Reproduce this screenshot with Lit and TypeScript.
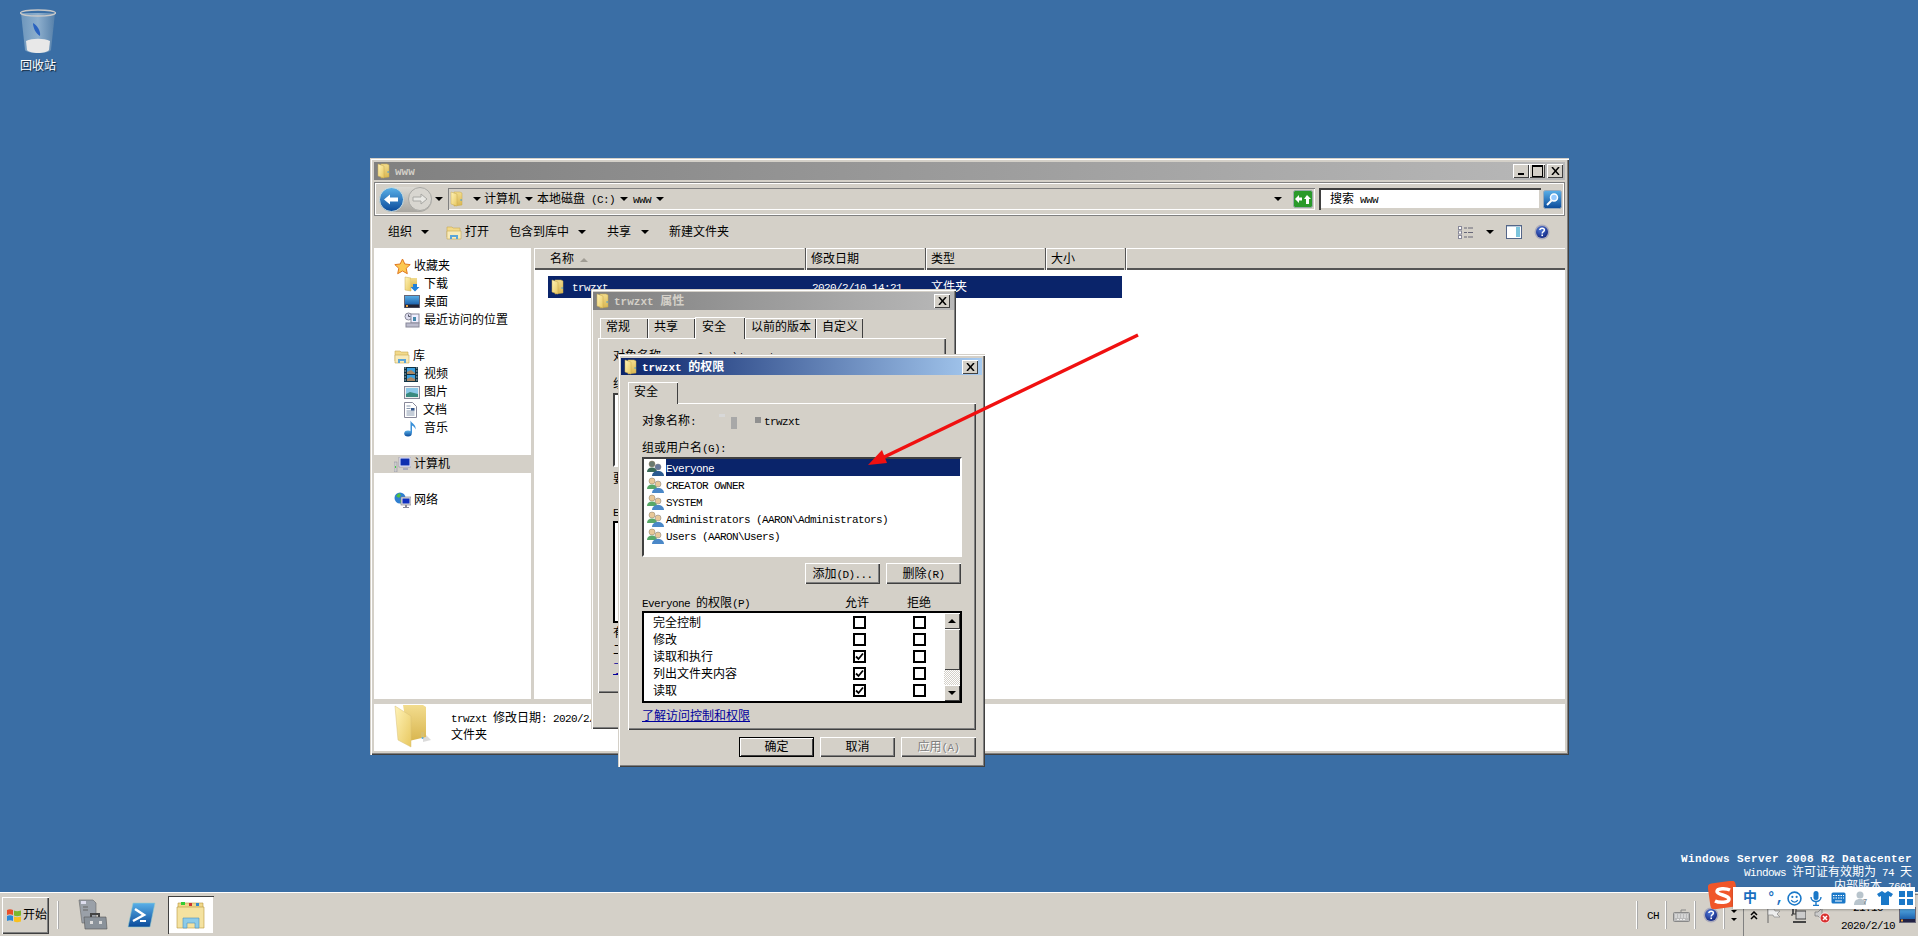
import { LitElement, css, html, svg } from "lit";
import { customElement } from "lit/decorators.js";

// ascii runs go in a narrower mono span, cjk stays at 12px like simsun
const t = (s: string) =>
  html`<span class="tx">${s
    .split(/([\x20-\x7e]+)/)
    .map((p, i) => (i % 2 ? html`<span class="lat">${p}</span>` : p))}</span>`;

const ic = (w: number, h: number, vb: string, body: unknown, cls = "") =>
  html`<svg class="ico ${cls}" width=${w} height=${h} viewBox=${vb}>${body}</svg>`;

const defs = html`<svg class="defs" width="0" height="0">
  <defs>
    <linearGradient id="fa" x1="0" y1="0" x2="1" y2="1"><stop offset="0" stop-color="#fff3b8" /><stop offset="1" stop-color="#e8c860" /></linearGradient>
    <linearGradient id="fb" x1="0" y1="0" x2="0" y2="1"><stop offset="0" stop-color="#f2dc8e" /><stop offset="1" stop-color="#d9b650" /></linearGradient>
    <linearGradient id="blue" x1="0" y1="0" x2="0" y2="1"><stop offset="0" stop-color="#5ab0e8" /><stop offset="1" stop-color="#0a4a9a" /></linearGradient>
    <linearGradient id="bin" x1="0" y1="0" x2="1" y2="0"><stop offset="0" stop-color="#7fa4c4" /><stop offset=".5" stop-color="#a9c4da" /><stop offset="1" stop-color="#5f86ab" /></linearGradient>
    <radialGradient id="navy" cx=".4" cy=".3" r=".8"><stop offset="0" stop-color="#4f78d8" /><stop offset="1" stop-color="#0c1f7a" /></radialGradient>
  </defs>
</svg>`;

const folder = (s = 16) =>
  ic(s, s, "0 0 16 16", svg`
    <path d="M5 1h6l2 1v12l-8 1z" fill="url(#fb)" stroke="#c8a848" stroke-width=".5"/>
    <path d="M2 1l6 2v12l-6-2z" fill="url(#fa)" stroke="#c9ab55" stroke-width=".5"/>
    <rect x="11.6" y="8" width="1" height="2" fill="#4aa0d8"/>`);

const bigFolder = ic(40, 44, "0 0 40 44", svg`
  <path d="M30 38l8-2-8-8z" fill="#999" opacity=".35"/>
  <path d="M10 1h20l3 2v30l-17 4z" fill="url(#fb)"/>
  <path d="M2 2l16 10v31L5 36z" fill="url(#fa)" stroke="#d8c078" stroke-width=".5"/>
  <rect x="28" y="28" width="3" height="6" fill="#d8c070"/><circle cx="29.5" cy="34" r="1" fill="#5aa8d8"/>`);

const library = ic(16, 16, "0 0 16 16", svg`
  <path d="M1 3h5l1 1h7v9H1z" fill="#f2d98a" stroke="#c8a850" stroke-width=".6"/>
  <path d="M1 7h14v8H1z" fill="#f8eab8" stroke="#c8a850" stroke-width=".6"/>
  <path d="M4 15v-4h8v4h-2v-2H6v2z" fill="#5aa4d8"/>`);

const star = ic(17, 17, "0 0 17 17", svg`<path d="M8.5 1l2.3 5 5.4.6-4 3.7 1.1 5.4-4.8-2.7-4.8 2.7 1.1-5.4-4-3.7 5.4-.6z" fill="#fcc850" stroke="#e07820" stroke-width="1"/>`);
const download = ic(16, 16, "0 0 16 16", svg`
  <path d="M1 1l6 1v13l-6-1z" fill="url(#fa)" stroke="#c9ab55" stroke-width=".5"/><path d="M7 2h6v9H7z" fill="url(#fb)"/>
  <path d="M9 8h4v3h2.500l-4.500 4.500L6.500 11H9z" fill="#2080d8"/>`);
const desk = ic(16, 14, "0 0 16 14", svg`<rect x=".5" y=".5" width="15" height="12" fill="url(#blue)" stroke="#667"/><rect x="1" y="9.500" width="14" height="3" fill="#223"/><rect x="2" y="10" width="2" height="2" fill="#e8a040"/>`);
const recent = ic(16, 16, "0 0 16 16", svg`
  <circle cx="4.500" cy="4.500" r="3.500" fill="#dde" stroke="#889"/><path d="M4.500 2.500v2h2" stroke="#556" fill="none"/>
  <rect x="7" y="2" width="8" height="9" fill="#eef" stroke="#889"/><rect x="2" y="11" width="13" height="4" fill="#bbc" stroke="#889"/><rect x="9" y="5" width="3" height="4" fill="#48a"/>`);
const video = ic(14, 15, "0 0 14 15", svg`<rect width="14" height="15" fill="#134"/><rect x="3" y="1" width="8" height="6" fill="#3aa0e0"/><rect x="3" y="8" width="8" height="6" fill="#3aa0e0"/><path d="M3 5l4-2 4 3v1H3zM3 12l4-2 4 2v2H3z" fill="#a86"/><path d="M.7 1h1M.7 4h1M.7 7h1M.7 10h1M.7 13h1M12.300 1h1M12.300 4h1M12.300 7h1M12.300 10h1M12.300 13h1" stroke="#fff"/>`);
const pic = ic(16, 13, "0 0 16 13", svg`<rect x=".5" y=".5" width="15" height="12" fill="#eee" stroke="#889"/><rect x="2" y="2" width="12" height="9" fill="#8cc8e8"/><path d="M2 8l4-2 8 2v3H2z" fill="#3a8a80"/>`);
const doc = ic(13, 16, "0 0 13 16", svg`<path d="M.5.5h8l4 4v11H.5z" fill="#fff" stroke="#889"/><path d="M2.500 4h4M2.500 6.500h4M2.500 9h8M2.500 11h8M2.500 13h8" stroke="#8a9ab0"/><rect x="7" y="6" width="3.500" height="2.500" fill="#358"/>`);
const music = ic(14, 17, "0 0 14 17", svg`<ellipse cx="4" cy="13.500" rx="3.800" ry="3" fill="url(#blue)"/><path d="M6.500 13V.500c1 3 6 4 5 9-.5-2.500-2.500-3.500-3.500-4V13z" fill="#3a90d8"/>`);
const computer = ic(17, 15, "0 0 17 15", svg`<rect x="0" y="5" width="3" height="10" fill="#ccc" stroke="#889" stroke-width=".5"/><rect x="1" y="9" width="1" height="2" fill="#4c4"/><rect x="5" y="0" width="12" height="10" fill="#eef" stroke="#889" stroke-width=".6"/><rect x="6.500" y="1.500" width="9" height="7" fill="#1030b0"/><path d="M9 11h5v2H9z" fill="#aab"/>`);
const network = ic(17, 17, "0 0 17 17", svg`<circle cx="6" cy="6" r="5.500" fill="#2f7fd0"/><path d="M2 4l3-3 2 2-2 3zM6 8l3 1-2 3z" fill="#50c040"/><rect x="7" y="5" width="10" height="8" fill="#ddd" stroke="#778" stroke-width=".6"/><rect x="8.500" y="6.500" width="7" height="5" fill="#1030c0"/><path d="M11 13h2v2h2v1h-6v-1h2z" fill="#889"/>`);

const users = (dark = false) => ic(17, 16, "0 0 17 16", svg`
  <circle cx="5" cy="4" r="3" fill=${dark ? "#6a7a70" : "#e8c898"} stroke="#8a7a60" stroke-width=".5"/>
  <path d="M0 12c0-3 2-4.500 5-4.500S10 9 10 12z" fill=${dark ? "#3a6a58" : "#58a868"}/>
  <circle cx="11" cy="7" r="3" fill=${dark ? "#66789a" : "#e8c898"} stroke="#7a7a80" stroke-width=".5"/>
  <path d="M5 16c0-3 2.500-5 6-5s6 2 6 5z" fill=${dark ? "#2a5a90" : "#4a88c8"}/>`);

const tick = ic(9, 9, "0 0 9 9", svg`<path d="M1 4.500l2.500 2.500L8 1.500" fill="none" stroke="#000" stroke-width="1.800"/>`);
const xGlyph = ic(9, 8, "0 0 9 8", svg`<path d="M1 0l7 8M8 0L1 8" stroke="#000" stroke-width="1.500"/>`);
const helpIcon = ic(16, 16, "0 0 16 16", svg`<circle cx="8" cy="8" r="7.500" fill="#aab" /><circle cx="8" cy="8" r="6" fill="url(#navy)"/><path d="M5.800 6c.3-2.500 4.600-2.500 4.600 0 0 1.800-2.200 1.600-2.200 3.500" fill="none" stroke="#fff" stroke-width="1.500"/><rect x="7.400" y="10.500" width="1.600" height="1.600" fill="#fff"/>`);

const perms: [string, boolean][] = [
  ["完全控制", false],
  ["修改", false],
  ["读取和执行", true],
  ["列出文件夹内容", true],
  ["读取", true],
];

@customElement("app-root")
export class AppRoot extends LitElement {
  static styles = css`
    :host { display: block; }
    * { box-sizing: border-box; }
    .root {
      position: relative; width: 1918px; height: 936px; overflow: hidden; display: flex; flex-direction: column;
      font: 12px/14px "Liberation Mono", "Noto Sans CJK SC", monospace; color: #000; background: #3a6ea5; white-space: nowrap;
    }
    .tx { display: inline-block; padding-top: 2px; }
    .lat { font: 11px/14px "Liberation Mono", monospace; letter-spacing: -0.6px; white-space: pre; }
    .defs { position: absolute; }
    .ico { display: block; flex: none; }
    .sp { flex: 1; }
    .ml2 { margin-left: 2px; } .ml3 { margin-left: 3px; } .ml4 { margin-left: 4px; } .ml5 { margin-left: 5px; }
    .ml6 { margin-left: 6px; } .ml7 { margin-left: 7px; } .ml8 { margin-left: 8px; } .ml9 { margin-left: 9px; }
    .ml10 { margin-left: 10px; } .ml11 { margin-left: 11px; } .ml12 { margin-left: 12px; } .ml17 { margin-left: 17px; }
    .ml19 { margin-left: 19px; } .ml20 { margin-left: 20px; } .ml21 { margin-left: 21px; } .ml22 { margin-left: 22px; }
    .dn { width: 0; height: 0; border: 4px solid transparent; border-top-color: #000; border-bottom: 0; flex: none; }

    .desktop { flex: 1; position: relative; padding: 9px 0 0 20px; }
    .bin { width: 36px; display: flex; flex-direction: column; align-items: center; color: #fff; text-shadow: 1px 1px 1px #123; }
    .bin span { margin-top: 2px; }
    .watermark { position: absolute; right: 6px; top: 850px; text-align: right; color: #fff; }
    .watermark b .lat { font-weight: 700; letter-spacing: 0.4px; }
    .watermark div { height: 14px; }

    .win {
      position: absolute; background: #d4d0c8; display: flex; flex-direction: column;
      box-shadow: inset 1px 1px #d4d0c8, inset 2px 2px #fff, inset -1px -1px #404040, inset -2px -2px #808080;
    }
    .explorer { left: 370px; top: 158px; width: 1199px; height: 597px; padding: 4px; }
    .props { left: 591px; top: 289px; width: 365px; height: 440px; padding: 3px 2px; }
    .perm { left: 618px; top: 354px; width: 367px; height: 413px; padding: 4px 3px; }

    .title { height: 18px; flex: none; display: flex; align-items: center; padding: 0 2px; font-weight: 700; color: #d4d0c8; background: linear-gradient(90deg, #808080, #b8b8b8); }
    .title .lat { font-weight: 700; letter-spacing: 0; }
    .title.on { color: #fff; background: linear-gradient(90deg, #0a246a, #a6caf0); height: 17px; }
    .title .label { margin-left: 3px; }
    .capbtn { width: 16px; height: 14px; background: #d4d0c8; display: flex; align-items: center; justify-content: center; box-shadow: inset 1px 1px #fff, inset -1px -1px #404040; flex: none; }
    .min::after { content: ""; width: 6px; height: 2px; background: #000; margin-top: 6px; }
    .max::after { content: ""; width: 9px; height: 9px; border: 1px solid #000; border-top-width: 2px; }
    .capgap { margin-left: 2px; }

    .addr { height: 34px; margin-top: 2px; flex: none; display: flex; align-items: center; padding: 0 3px 0 5px; box-shadow: inset 0 0 0 1px #808080, inset 0 0 0 2px #fff; }
    .navbtns { display: flex; align-items: center; gap: 4px; border-radius: 13px; background: linear-gradient(#dcdad4, #a8a6a0); flex: none; }
    .addrbox { flex: 1; height: 22px; margin-left: 5px; display: flex; align-items: center; padding-left: 1px; box-shadow: inset 1px 1px #808080, inset -1px -1px #fff; }
    .search { width: 222px; height: 22px; margin-left: 4px; background: #fff; display: flex; align-items: center; padding-left: 11px; box-shadow: inset 2px 2px #404040, inset -2px -2px #d4d0c8; }

    .cmd { height: 32px; flex: none; display: flex; align-items: center; padding: 0 15px 0 14px; }
    .body { flex: 1; display: flex; min-height: 0; }
    .nav { width: 157px; background: #fff; padding-top: 9px; flex: none; }
    .nav .row { height: 18px; display: flex; align-items: center; padding-left: 20px; }
    .nav .sub { padding-left: 30px; }
    .nav .sub svg { margin-right: 4px; }
    .nav .row.hd svg { margin-right: 3px; }
    .nav .sel { background: #d4d0c8; }
    .nav .gap { height: 18px; }
    .main { flex: 1; margin-left: 3px; background: #fff; min-width: 0; }
    .hdr { height: 22px; background: #d4d0c8; display: flex; box-shadow: inset 0 1px #fff, inset 0 -2px #555; }
    .hdr div { padding: 3px 0 0 5px; box-shadow: inset -1px 0 #555, inset -2px 0 #d4d0c8, inset 1px 1px #fff; }
    .hdr .c1 { width: 272px; padding-left: 16px; display: flex; }
    .hdr .c1 i { margin: 7px 0 0 6px; width: 0; height: 0; border: 4px solid transparent; border-bottom-color: #a09c94; border-top: 0; }
    .hdr .c2, .hdr .c3 { width: 120px; }
    .hdr .c4 { width: 80px; }
    .hdr .c5 { flex: 1; box-shadow: inset 1px 1px #fff; }
    .item { margin: 6px 0 0 14px; width: 574px; height: 22px; background: #0a246a; color: #fff; display: grid; grid-template-columns: 264px 119px 1fr; align-items: center; }
    .item .nm { display: flex; align-items: center; gap: 6px; padding-left: 2px; }
    .details { height: 47px; margin-top: 5px; flex: none; background: #fff; display: flex; padding: 0 0 0 19px; }
    .details .txt { margin-left: 18px; padding-top: 4px; line-height: 18px; }
    .details .txt div { height: 17px; }

    .tabs { display: flex; align-items: flex-end; height: 28px; flex: none; }
    .tab { height: 20px; padding: 1px 0 0 6px; background: #d4d0c8; box-shadow: inset 1px 1px #fff, inset -1px 0 #404040; flex: none; }
    .tab.act { height: 22px; margin-bottom: -1px; position: relative; z-index: 1; padding-top: 2px; padding-left: 7px; }
    .props .tabs { padding-left: 7px; }
    .w48 { width: 48px; } .w47 { width: 47px; } .w50 { width: 50px; } .w71 { width: 71px; }
    .page { box-shadow: inset 1px 1px #fff, inset -1px -1px #404040, inset -2px -2px #808080; }
    .props .page { margin: 0 8px 0 5px; height: 355px; padding: 11px 0 0 15px; }
    .line { height: 14px; display: flex; align-items: center; }
    .mt1 { margin-top: 1px; } .mt2 { margin-top: 2px; } .mt3 { margin-top: 3px; } .mt5 { margin-top: 5px; } .mt6 { margin-top: 6px; } .mt7 { margin-top: 7px; }
    .mt8 { margin-top: 8px; } .mt12 { margin-top: 12px; } .mt13 { margin-top: 13px; } .mt14 { margin-top: 14px; } .mt19 { margin-top: 19px; }
    .lb1 { width: 310px; height: 74px; background: #fff; border: 2px solid; border-color: #404040 #fff #fff #404040; }
    .lb2 { width: 310px; height: 102px; background: #fff; border: 2px solid #000; }
    .link .tx { color: #00009c; text-decoration: underline; }

    .perm .tabs { height: 28px; padding-left: 0; margin: 0 0 0 7px; }
    .perm .tab.act { width: 50px; padding-left: 6px; }
    .perm .page { margin: 0 6px 0 7px; height: 327px; padding: 11px 0 0 14px; }
    .redact { display: flex; width: 68px; height: 14px; flex: none; }
    .redact i { display: block; background: #a8a8a8; flex: none; }
    .r1 { width: 6px; height: 3px; margin: 0 0 0 23px; background: #d8d8d8 !important; }
    .r2 { width: 6px; height: 12px; margin: 3px 0 0 6px; }
    .r3 { width: 6px; height: 6px; margin: 3px 0 0 18px; background: #909090 !important; }
    .users { width: 320px; height: 100px; background: #fff; border: 2px solid; border-color: #404040 #fff #fff #404040; padding: 0 0 0 1px; }
    .urow { height: 17px; display: flex; align-items: center; padding-left: 2px; }
    .urow span.n { margin-left: 2px; flex: 1; height: 17px; line-height: 17px; }
    .urow.sel span.n { background: #0a246a; color: #fff; }
    .acts { display: flex; justify-content: flex-end; width: 319px; gap: 6px; }
    .btn { width: 75px; height: 21px; background: #d4d0c8; display: flex; align-items: center; justify-content: center; box-shadow: inset 1px 1px #fff, inset -1px -1px #404040, inset -2px -2px #808080; flex: none; }
    .phead { display: flex; }
    .phead .a { margin-left: 95px; }
    .phead .b { margin-left: 38px; }
    .plist { width: 320px; height: 92px; background: #fff; border: 2px solid #000; display: flex; }
    .prows { flex: 1; }
    .prow { height: 17px; display: grid; grid-template-columns: 200px 13px 47px 13px; align-items: center; padding-left: 9px; }
    .prow:first-child { margin-top: 1px; }
    .chk { width: 13px; height: 13px; border: 2px solid #000; background: #fff; display: flex; align-items: center; justify-content: center; overflow: hidden; }
    .sb { width: 16px; display: flex; flex-direction: column; background: repeating-conic-gradient(#fff 0 25%, #d4d0c8 0 50%) 0 0 / 2px 2px; }
    .sbb { height: 16px; background: #d4d0c8; display: flex; align-items: center; justify-content: center; box-shadow: inset 1px 1px #fff, inset -1px -1px #404040; flex: none; }
    .sbb.up::after { content: ""; border: 4px solid transparent; border-bottom-color: #000; border-top: 0; }
    .sbb.down::after { content: ""; border: 4px solid transparent; border-top-color: #000; border-bottom: 0; }
    .thumb { height: 41px; background: #d4d0c8; box-shadow: inset 1px 1px #fff, inset -1px -1px #404040; }
    .foot { display: flex; justify-content: flex-end; padding-right: 6px; gap: 6px; margin-top: 7px; }
    .foot .btn { height: 20px; }
    .btn.def { box-shadow: inset 0 0 0 1px #000, inset 2px 2px #fff, inset -2px -2px #404040; }
    .btn.off { color: #808080; text-shadow: 1px 1px #fff; }

    .arrow { position: absolute; left: 0; top: 0; pointer-events: none; }

    .taskbar { height: 44px; flex: none; position: relative; background: #d4d0c8; box-shadow: inset 0 1px #fff; display: flex; align-items: center; padding-top: 2px; }
    .start { margin-left: 2px; width: 47px; height: 37px; display: flex; align-items: center; padding-left: 4px; gap: 1px; box-shadow: inset 1px 1px #fff, inset -1px -1px #404040, inset -2px -2px #808080; flex: none; }
    .vsep { width: 2px; height: 28px; background: #808080; box-shadow: inset -1px 0 #fff; flex: none; }
    .vsep.lt { background: #fff; box-shadow: inset -1px 0 #aaa; }
    .active { width: 46px; height: 38px; margin-left: 12px; display: flex; align-items: center; justify-content: center; background: #fff; box-shadow: inset 1px 1px #404040, inset -1px -1px #d4d0c8; flex: none; }
    .tray { height: 42px; margin-left: 6px; width: 175px; display: flex; align-items: center; padding-left: 4px; box-shadow: inset 1px 1px #808080; flex: none; }
    .clock { width: 56px; margin-left: 10px; text-align: center; line-height: 18px; }
    .clock div { height: 18px; }
    .updown { display: flex; flex-direction: column; gap: 5px; align-items: center; }
    .updown i { display: block; border: 3.5px solid transparent; border-top-color: #000; border-bottom: 0; }
    .sogou { position: absolute; left: 1733px; top: 887px; width: 182px; height: 22px; background: #fff; display: flex; align-items: center; box-shadow: 0 1px 2px #0004; color: #1a6fc0; font-weight: 700; font-size: 14px; padding-left: 10px; }
    .logo { position: absolute; left: 1708px; top: 881px; }
  `;

  private cap(x = false) {
    return html`<div class="capbtn">${x ? xGlyph : ""}</div>`;
  }

  private get navPart() {
    return html`<div class="nav">
      <div class="row hd">${star}${t("收藏夹")}</div>
      <div class="row sub">${download}${t("下载")}</div>
      <div class="row sub">${desk}${t("桌面")}</div>
      <div class="row sub">${recent}${t("最近访问的位置")}</div>
      <div class="gap"></div>
      <div class="row hd">${library}${t("库")}</div>
      <div class="row sub">${video}<span class="ml2">${t("视频")}</span></div>
      <div class="row sub">${pic}${t("图片")}</div>
      <div class="row sub">${doc}<span class="ml2">${t("文档")}</span></div>
      <div class="row sub">${music}<span class="ml2">${t("音乐")}</span></div>
      <div class="gap"></div>
      <div class="row hd sel">${computer}${t("计算机")}</div>
      <div class="gap"></div>
      <div class="row hd">${network}${t("网络")}</div>
    </div>`;
  }

  private get explorerPart() {
    const back = ic(25, 25, "0 0 25 25", svg`<circle cx="12.500" cy="12.500" r="12" fill="url(#blue)" stroke="#cdd" /><path d="M5 12.500l6-5v3h8v4h-8v3z" fill="#fff"/>`);
    const fwd = ic(24, 24, "0 0 24 24", svg`<circle cx="12" cy="12" r="11.500" fill="#d8d6d0" stroke="#a8a8a4"/><path d="M19 12l-6-5v3H5v4h8v3z" fill="#e8e8e4" stroke="#a8a8a4"/>`);
    const refresh = ic(20, 18, "0 0 20 18", svg`<rect x=".5" y=".5" width="19" height="17" rx="2" fill="#2a9a2a" stroke="#9aa"/><path d="M2 9l4-4v2.500h3v3H6V13zM18 9l-4-4-3 4h2v5h3V9z" fill="#fff"/>`);
    const findBtn = ic(19, 19, "0 0 19 19", svg`<rect x=".5" y=".5" width="18" height="18" rx="2" fill="url(#blue)" stroke="#9ab"/><circle cx="11" cy="7.500" r="3.500" fill="#9cf" stroke="#fff" stroke-width="1.500"/><path d="M8.500 10.500L4 15" stroke="#fff" stroke-width="2"/>`);
    const views = ic(16, 13, "0 0 16 13", svg`<rect x=".5" y=".5" width="3" height="3" fill="#fff" stroke="#889"/><rect x=".5" y="5" width="3" height="3" fill="#fff" stroke="#889"/><rect x=".5" y="9.500" width="3" height="3" fill="#fff" stroke="#889"/><path d="M6 2h3M10 2h5M6 6.500h3M10 6.500h5M6 11h3M10 11h5" stroke="#667"/>`);
    const pane = ic(16, 14, "0 0 16 14", svg`<rect x=".5" y=".5" width="15" height="13" fill="#fff" stroke="#568"/><rect x="10" y="2" width="4" height="10" fill="#7cc4dc"/><rect x="1" y="1" width="14" height="1" fill="#bcd"/>`);
    return html`<div class="win explorer">
      <div class="title">${folder()}<span class="label">${t("www")}</span><span class="sp"></span>
        <div class="capbtn min"></div><div class="capbtn max"></div><div class="capbtn capgap">${xGlyph}</div></div>
      <div class="addr">
        <div class="navbtns">${back}${fwd}</div>
        <span class="dn ml3"></span>
        <div class="addrbox">
          ${folder()}<span class="dn ml8"></span><span class="ml3">${t("计算机")}</span><span class="dn ml5"></span>
          <span class="ml4">${t("本地磁盘 (C:)")}</span><span class="dn ml5"></span><span class="ml5">${t("www")}</span><span class="dn ml5"></span>
          <span class="sp"></span><span class="dn"></span><span class="ml11">${refresh}</span><span class="ml2"></span>
        </div>
        <div class="search">${t("搜索 www")}</div>
        <span class="ml2">${findBtn}</span>
      </div>
      <div class="cmd">
        ${t("组织")}<span class="dn ml9"></span><span class="ml17">${library}</span><span class="ml3">${t("打开")}</span>
        <span class="ml20">${t("包含到库中")}</span><span class="dn ml9"></span>
        <span class="ml21">${t("共享")}</span><span class="dn ml10"></span>
        <span class="ml20">${t("新建文件夹")}</span><span class="sp"></span>
        ${views}<span class="dn ml12"></span><span class="ml12">${pane}</span><span class="ml12">${helpIcon}</span>
      </div>
      <div class="body">
        ${this.navPart}
        <div class="main">
          <div class="hdr">
            <div class="c1">${t("名称")}<i></i></div><div class="c2">${t("修改日期")}</div>
            <div class="c3">${t("类型")}</div><div class="c4">${t("大小")}</div><div class="c5"></div>
          </div>
          <div class="item"><span class="nm">${folder()}${t("trwzxt")}</span><span>${t("2020/2/10 14:21")}</span><span>${t("文件夹")}</span></div>
        </div>
      </div>
      <div class="details">${bigFolder}
        <div class="txt"><div>${t("trwzxt 修改日期: 2020/2/10 14:21")}</div><div>${t("文件夹")}</div></div>
      </div>
    </div>`;
  }

  private get propsPart() {
    return html`<div class="win props">
      <div class="title">${folder()}<span class="label">${t("trwzxt 属性")}</span><span class="sp"></span>${this.cap(true)}<span class="ml2"></span></div>
      <div class="tabs">
        <div class="tab w48">${t("常规")}</div><div class="tab w47">${t("共享")}</div><div class="tab act w50">${t("安全")}</div>
        <div class="tab w71">${t("以前的版本")}</div><div class="tab w47">${t("自定义")}</div>
      </div>
      <div class="page">
        <div class="line">${t("对象名称:     C:\\www\\trwzxt")}</div>
        <div class="line mt14">${t("组或用户名(G):")}</div>
        <div class="lb1 mt2"></div>
        <div class="line mt5">${t("要更改权限,请单击“编辑”。")}</div>
        <div class="line mt19">${t("Everyone 的权限")}</div>
        <div class="lb2 mt2"></div>
        <div class="line mt3">${t("有关特殊权限或高级设置,请单击“高级”。")}</div>
        <div class="line mt3">${t("二")}</div>
        <div class="line mt5 link">${t("了解访问控制和权限")}</div>
      </div>
    </div>`;
  }

  private get permPart() {
    const names = ["CREATOR OWNER", "SYSTEM", "Administrators (AARON\\Administrators)", "Users (AARON\\Users)"];
    return html`<div class="win perm">
      <div class="title on">${folder()}<span class="label">${t("trwzxt 的权限")}</span><span class="sp"></span>${this.cap(true)}<span class="ml2"></span></div>
      <div class="tabs"><div class="tab act">${t("安全")}</div></div>
      <div class="page">
        <div class="line">${t("对象名称:")}<span class="redact"><i class="r1"></i><i class="r2"></i><i class="r3"></i></span>${t("trwzxt")}</div>
        <div class="line mt13">${t("组或用户名(G):")}</div>
        <div class="users mt2">
          <div class="urow sel">${users(true)}<span class="n">${t("Everyone")}</span></div>
          ${names.map((n) => html`<div class="urow">${users()}<span class="n">${t(n)}</span></div>`)}
        </div>
        <div class="acts mt6"><div class="btn">${t("添加(D)...")}</div><div class="btn">${t("删除(R)")}</div></div>
        <div class="line phead mt12"><span>${t("Everyone 的权限(P)")}</span><span class="a">${t("允许")}</span><span class="b">${t("拒绝")}</span></div>
        <div class="plist mt1">
          <div class="prows">
            ${perms.map(([n, on]) => html`<div class="prow"><span>${t(n)}</span><span class="chk">${on ? tick : ""}</span><span></span><span class="chk"></span></div>`)}
          </div>
          <div class="sb"><div class="sbb up"></div><div class="thumb"></div><span class="sp"></span><div class="sbb down"></div></div>
        </div>
        <div class="line mt6 link">${t("了解访问控制和权限")}</div>
      </div>
      <div class="foot">
        <div class="btn def">${t("确定")}</div><div class="btn">${t("取消")}</div><div class="btn off">${t("应用(A)")}</div>
      </div>
    </div>`;
  }

  private get taskbarPart() {
    const flag = ic(16, 16, "0 0 16 16", svg`<path d="M1 3c2-1 4-1 6 0v5C5 7 3 7 1 8z" fill="#e8502a"/><path d="M8 3.500c2 1 4 1 7 0v5c-3 1-5 1-7 0z" fill="#7ab82c"/><path d="M1 9c2-1 4-1 6 0v5c-2-1-4-1-6 0z" fill="#2a88d8"/><path d="M8 9.500c2 1 4 1 7 0v5c-3 1-5 1-7 0z" fill="#f8c020"/>`);
    const server = ic(30, 32, "0 0 30 32", svg`<path d="M1 1h14l3 3v20H4z" fill="#9aa0a8" stroke="#666" stroke-width=".6"/><path d="M3 2h5v3H3z" fill="#dde"/><path d="M5 8h5M5 11h5" stroke="#666"/><path d="M6 18h22l1 12H7z" fill="#8a929a" stroke="#555" stroke-width=".6"/><path d="M13 18v-3h8v3" fill="none" stroke="#444" stroke-width="2"/><rect x="12" y="22" width="3" height="3" fill="#ddd"/><rect x="21" y="22" width="3" height="3" fill="#ddd"/>`);
    const ps = ic(29, 26, "0 0 29 26", svg`<path d="M6 1h22l-5 24H1z" fill="url(#blue)" stroke="#9cc" stroke-width=".6"/><path d="M8 7l9 6-11 6" fill="none" stroke="#fff" stroke-width="2.500"/><path d="M13 19h6" stroke="#fff" stroke-width="2"/>`);
    const expl = ic(30, 30, "0 0 30 30", svg`<path d="M2 3h25v6H2z" fill="#f0d88a" stroke="#b8983c" stroke-width=".6"/><rect x="5" y="2" width="4" height="3" fill="#3c3"/><rect x="13" y="3" width="3" height="3" fill="#c33"/><rect x="20" y="3" width="3" height="3" fill="#38c"/><path d="M1 7h27v21H1z" fill="#f4e2a0" stroke="#b8983c" stroke-width=".6"/><path d="M7 28V18h16v10h-4v-5h-8v5z" fill="#8ccbe8" stroke="#4a90c0" stroke-width=".6"/>`);
    const kb = ic(17, 13, "0 0 17 13", svg`<rect x=".5" y="3.500" width="16" height="9" rx="1" fill="#bbb" stroke="#888"/><path d="M2 6h13M2 8h13M4 10.500h9" stroke="#eee" stroke-dasharray="2 1"/><path d="M8 3.500V1h5" stroke="#888" fill="none"/>`);
    const fl = ic(15, 16, "0 0 15 16", svg`<path d="M2 1v15" stroke="#666"/><path d="M2 2h6l1 2h5l-3 3 3 3H8L7 8H2z" fill="#eee" stroke="#888" stroke-width=".7"/>`);
    const net = ic(15, 16, "0 0 15 16", svg`<rect x="1" y="1" width="2" height="6" fill="#555"/><path d="M5 1v6h-4v2" stroke="#333" fill="none"/><rect x="5" y="4" width="10" height="8" fill="#ccc" stroke="#444"/><path d="M2 15h13" stroke="#444" stroke-width="2"/>`);
    const spk = ic(16, 16, "0 0 16 16", svg`<path d="M1 5h3l4-4v12L4 9H1z" fill="#ccc" stroke="#777" stroke-width=".7"/><circle cx="11" cy="11" r="5" fill="#d83030" stroke="#fff" stroke-width=".8"/><path d="M9 9l4 4M13 9l-4 4" stroke="#fff" stroke-width="1.500"/>`);
    const show = ic(17, 16, "0 0 17 16", svg`<rect x=".5" y=".5" width="16" height="15" fill="url(#blue)" stroke="#667"/><rect x="1" y="12" width="15" height="3" fill="#224"/><rect x="2" y="12.500" width="2" height="2" fill="#e8a040"/>`);
    const chev = ic(8, 9, "0 0 8 9", svg`<path d="M1 4l3-3 3 3M1 8l3-3 3 3" fill="none" stroke="#000" stroke-width="1.500"/>`);
    return html`<div class="taskbar">
      <div class="start">${flag}${t("开始")}</div>
      <span class="vsep lt ml8"></span>
      <span class="ml19">${server}</span>
      <span class="ml19">${ps}</span>
      <div class="active">${expl}</div>
      <span class="sp"></span>
      <span class="vsep lt"></span>
      <span class="ml9">${t("CH")}</span>
      <span class="vsep lt ml6"></span>
      <span class="ml6">${kb}</span>
      <span class="vsep lt ml4"></span>
      <span class="ml7">${helpIcon}</span>
      <span class="vsep lt ml4"></span>
      <span class="updown ml6"><i></i><i></i></span>
      <div class="tray">
        <span class="ml3">${chev}</span>
        <span class="ml8">${fl}</span>
        <span class="ml10">${net}</span>
        <span class="ml8">${spk}</span>
        <div class="clock"><div>${t("21:10")}</div><div>${t("2020/2/10")}</div></div>
        <span class="ml3">${show}</span>
      </div>
    </div>`;
  }

  private get sogouPart() {
    const face = ic(15, 15, "0 0 14 14", svg`<circle cx="7" cy="7" r="6" fill="none" stroke="#1a78c8" stroke-width="1.500"/><circle cx="5" cy="5.500" r="1" fill="#1a78c8"/><circle cx="9" cy="5.500" r="1" fill="#1a78c8"/><path d="M4 8.500c1 2.500 5 2.500 6 0" fill="none" stroke="#1a78c8" stroke-width="1.200"/>`);
    const mic = ic(12, 15, "0 0 12 15", svg`<rect x="3.500" y="0" width="5" height="9" rx="2.500" fill="#1a78c8"/><path d="M1 6c0 6 10 6 10 0M6 11v3M3 14.500h6" fill="none" stroke="#1a78c8" stroke-width="1.400"/>`);
    const keys = ic(15, 12, "0 0 15 12", svg`<rect x=".5" y=".5" width="14" height="11" rx="1.500" fill="#1a78c8"/><path d="M2 3.500h11M2 6h11" stroke="#fff" stroke-dasharray="1.500 1"/><path d="M4 9h7" stroke="#fff"/>`);
    const user = ic(14, 14, "0 0 14 14", svg`<circle cx="6" cy="4" r="3.500" fill="#b8c4cc"/><path d="M0 14c0-4 2-6 6-6s6 2 6 6z" fill="#b8c4cc"/><text x="9" y="13" font-size="7" fill="#7a8a94">7</text>`);
    const shirt = ic(16, 14, "0 0 16 14", svg`<path d="M5 0l3 2 3-2 5 3-2 3-2-1v9H4V5L2 6 0 3z" fill="#1a78c8"/>`);
    const grid = ic(14, 14, "0 0 14 14", svg`<path d="M0 0h6v6H0zM8 0h6v6H8zM0 8h6v6H0zM8 8h6v6H8z" fill="#1a78c8"/>`);
    const logo = ic(30, 28, "0 0 30 28", svg`<rect x="1" y="1" width="28" height="26" rx="4" transform="rotate(-8 15 14)" fill="#f0562a"/><path d="M22 9c-4-2-13-2-13 1.500S21 14 21 18s-10 4-14 2" fill="none" stroke="#fff" stroke-width="3.500"/>`);
    return html`<span class="logo">${logo}</span>
      <div class="sogou">
        <span>中</span><span class="ml10">°,</span><span class="ml3">${face}</span><span class="ml8">${mic}</span>
        <span class="ml9">${keys}</span><span class="ml8">${user}</span><span class="ml9">${shirt}</span><span class="ml6">${grid}</span>
      </div>`;
  }

  render() {
    const bin = ic(36, 45, "0 0 36 45", svg`
      <path d="M1 4l4 37c2 4 24 4 26 0l4-37z" fill="url(#bin)" opacity=".75"/>
      <path d="M6 32c6-3 18-3 24 0l-1 9c-3 4-19 4-22 0z" fill="#e8e8e8"/>
      <path d="M13 14c4 2 8 8 7 13-4-2-7-8-7-13z" fill="#2a62c0"/>
      <ellipse cx="18" cy="4" rx="17.500" ry="3" fill="none" stroke="#c8c8c8" stroke-width="1.500"/>`);
    return html`<div class="root">
      ${defs}
      <div class="desktop">
        <div class="bin">${bin}<span>${t("回收站")}</span></div>
        <div class="watermark">
          <div><b>${t("Windows Server 2008 R2 Datacenter")}</b></div>
          <div>${t("Windows 许可证有效期为 74 天")}</div>
          <div>${t("内部版本 7601")}</div>
        </div>
      </div>
      ${this.taskbarPart}
      ${this.explorerPart}
      ${this.propsPart}
      ${this.permPart}
      <svg class="arrow" width="1918" height="936">
        <path d="M1138 335L880 459" stroke="#f01010" stroke-width="3.500"/>
        <path d="M868 465l14-15 5 13z" fill="#f01010"/>
      </svg>
      ${this.sogouPart}
    </div>`;
  }
}
